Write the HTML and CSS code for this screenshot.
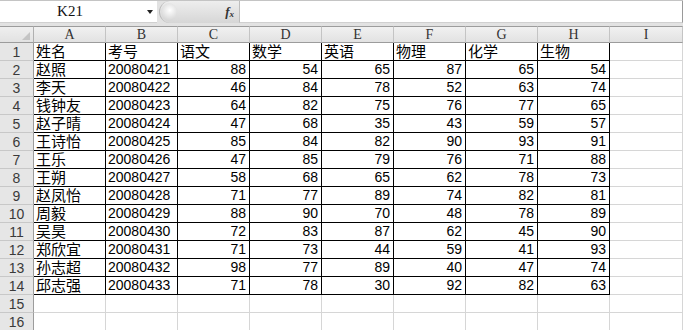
FILE: index.html
```html
<!DOCTYPE html>
<html>
<head>
<meta charset="utf-8">
<link rel="stylesheet" href="styles.css">
</head>
<body>
<div class="top">
  <div class="namebox"><span class="ref">K21</span><span class="arrow"></span></div>
  <div class="pill"><span class="knob"></span><span class="fx">f<sub>x</sub></span></div>
  <div class="formula"></div>
</div>
<div class="sheet">
  <div class="corner"><span class="tri"></span></div>
  <div class="h">A</div><div class="h">B</div><div class="h">C</div><div class="h">D</div><div class="h">E</div><div class="h">F</div><div class="h">G</div><div class="h">H</div><div class="h">I</div>

  <div class="r">1</div><div class="c t b">姓名</div><div class="c t b">考号</div><div class="c t b">语文</div><div class="c t b">数学</div><div class="c t b">英语</div><div class="c t b">物理</div><div class="c t b">化学</div><div class="c t b">生物</div><div class="c"></div>
  <div class="r">2</div><div class="c t b">赵照</div><div class="c m b">20080421</div><div class="c n b">88</div><div class="c n b">54</div><div class="c n b">65</div><div class="c n b">87</div><div class="c n b">65</div><div class="c n b">54</div><div class="c"></div>
  <div class="r">3</div><div class="c t b">李天</div><div class="c m b">20080422</div><div class="c n b">46</div><div class="c n b">84</div><div class="c n b">78</div><div class="c n b">52</div><div class="c n b">63</div><div class="c n b">74</div><div class="c"></div>
  <div class="r">4</div><div class="c t b">钱钟友</div><div class="c m b">20080423</div><div class="c n b">64</div><div class="c n b">82</div><div class="c n b">75</div><div class="c n b">76</div><div class="c n b">77</div><div class="c n b">65</div><div class="c"></div>
  <div class="r">5</div><div class="c t b">赵子晴</div><div class="c m b">20080424</div><div class="c n b">47</div><div class="c n b">68</div><div class="c n b">35</div><div class="c n b">43</div><div class="c n b">59</div><div class="c n b">57</div><div class="c"></div>
  <div class="r">6</div><div class="c t b">王诗怡</div><div class="c m b">20080425</div><div class="c n b">85</div><div class="c n b">84</div><div class="c n b">82</div><div class="c n b">90</div><div class="c n b">93</div><div class="c n b">91</div><div class="c"></div>
  <div class="r">7</div><div class="c t b">王乐</div><div class="c m b">20080426</div><div class="c n b">47</div><div class="c n b">85</div><div class="c n b">79</div><div class="c n b">76</div><div class="c n b">71</div><div class="c n b">88</div><div class="c"></div>
  <div class="r">8</div><div class="c t b">王朔</div><div class="c m b">20080427</div><div class="c n b">58</div><div class="c n b">68</div><div class="c n b">65</div><div class="c n b">62</div><div class="c n b">78</div><div class="c n b">73</div><div class="c"></div>
  <div class="r">9</div><div class="c t b">赵凤怡</div><div class="c m b">20080428</div><div class="c n b">71</div><div class="c n b">77</div><div class="c n b">89</div><div class="c n b">74</div><div class="c n b">82</div><div class="c n b">81</div><div class="c"></div>
  <div class="r">10</div><div class="c t b">周毅</div><div class="c m b">20080429</div><div class="c n b">88</div><div class="c n b">90</div><div class="c n b">70</div><div class="c n b">48</div><div class="c n b">78</div><div class="c n b">89</div><div class="c"></div>
  <div class="r">11</div><div class="c t b">吴昊</div><div class="c m b">20080430</div><div class="c n b">72</div><div class="c n b">83</div><div class="c n b">87</div><div class="c n b">62</div><div class="c n b">45</div><div class="c n b">90</div><div class="c"></div>
  <div class="r">12</div><div class="c t b">郑欣宜</div><div class="c m b">20080431</div><div class="c n b">71</div><div class="c n b">73</div><div class="c n b">44</div><div class="c n b">59</div><div class="c n b">41</div><div class="c n b">93</div><div class="c"></div>
  <div class="r">13</div><div class="c t b">孙志超</div><div class="c m b">20080432</div><div class="c n b">98</div><div class="c n b">77</div><div class="c n b">89</div><div class="c n b">40</div><div class="c n b">47</div><div class="c n b">74</div><div class="c"></div>
  <div class="r">14</div><div class="c t b">邱志强</div><div class="c m b">20080433</div><div class="c n b">71</div><div class="c n b">78</div><div class="c n b">30</div><div class="c n b">92</div><div class="c n b">82</div><div class="c n b">63</div><div class="c"></div>
  <div class="r">15</div><div class="c"></div><div class="c"></div><div class="c"></div><div class="c"></div><div class="c"></div><div class="c"></div><div class="c"></div><div class="c"></div><div class="c"></div>
  <div class="r">16</div><div class="c"></div><div class="c"></div><div class="c"></div><div class="c"></div><div class="c"></div><div class="c"></div><div class="c"></div><div class="c"></div><div class="c"></div>
</div>
</body>
</html>
```

FILE: styles.css
```css
html, body {
  margin: 0;
  padding: 0;
  background: #ffffff;
  overflow: hidden;
  width: 683px;
  height: 330px;
}

.top {
  box-sizing: border-box;
  height: 26px;
  display: flex;
  background: #e2e2e2;
  border-top: 1px solid #c4c4c4;
  padding-bottom: 3px;
}

.namebox {
  width: 157px;
  background: #ffffff;
  display: flex;
  align-items: center;
  border-bottom: 1px solid #d0d0d0;
  box-sizing: border-box;
}

.ref {
  width: 140px;
  text-align: center;
  font-family: "Liberation Serif", serif;
  font-size: 15px;
  color: #111;
}

.arrow {
  width: 0;
  height: 0;
  border-left: 3px solid transparent;
  border-right: 3px solid transparent;
  border-top: 4px solid #222;
  margin-left: 7px;
}

.pill {
  width: 80px;
  display: flex;
  align-items: center;
  justify-content: space-between;
  background: linear-gradient(#eeeeee, #d6d6d6);
  border-top-left-radius: 11px;
  border-bottom-left-radius: 11px;
  box-sizing: border-box;
  border-left: 1px solid #b8b8b8;
  padding: 0 5px 0 1px;
  margin-left: 2px;
}

.knob {
  width: 16px;
  height: 18px;
  border-radius: 50%;
  background: radial-gradient(circle at 55% 40%, #ffffff 0, #e6e6e6 45%, #c8c8c8 100%);
}

.fx {
  font-family: "Liberation Serif", serif;
  font-style: italic;
  font-weight: bold;
  font-size: 13px;
  color: #333;
}

.fx sub {
  font-size: 9px;
  vertical-align: -1px;
}

.formula {
  flex: 1;
  background: #ffffff;
  border-left: 1px solid #bdbdbd;
  border-right: 1px solid #9a9a9a;
  border-bottom: 1px solid #d0d0d0;
  box-sizing: border-box;
}

.sheet {
  display: grid;
  grid-template-columns: 34px repeat(8, 72px) 73px;
  grid-template-rows: 17px;
  grid-auto-rows: 18px;
}

.sheet > div {
  box-sizing: border-box;
  overflow: hidden;
  white-space: nowrap;
}

.corner {
  background: linear-gradient(#efefef, #e2e2e2);
  border-top: 1px solid #9c9c9c;
  border-right: 1px solid #b0b0b0;
  border-bottom: 1px solid #9c9c9c;
  position: relative;
}

.tri {
  position: absolute;
  right: 3px;
  bottom: 2px;
  width: 0;
  height: 0;
  border-left: 8px solid transparent;
  border-bottom: 8px solid #c4c4c4;
}

.h {
  background: linear-gradient(#f1f1f1, #e2e2e2);
  border-top: 1px solid #9c9c9c;
  border-right: 1px solid #c4c4c4;
  border-bottom: 1px solid #9c9c9c;
  font-family: "Liberation Serif", serif;
  font-size: 14px;
  line-height: 15px;
  text-align: center;
  color: #333;
}

.r {
  background: #e6e6e6;
  border-right: 1px solid #9c9c9c;
  border-bottom: 1px solid #c8c8c8;
  font-family: "Liberation Sans", sans-serif;
  font-size: 14px;
  line-height: 18px;
  text-align: center;
  color: #3a3a3a;
}

.c {
  border-right: 1px solid #d6d6d6;
  border-bottom: 1px solid #d6d6d6;
  display: flex;
  align-items: flex-end;
  padding: 0 2px 1px 2px;
  color: #000;
}

.c.b {
  border-color: #000000;
}

.sheet > .t {
  font-family: "Noto Sans CJK SC", sans-serif;
  font-size: 15px;
  line-height: 16px;
  overflow: visible;
}

.m, .n {
  font-family: "Liberation Sans", sans-serif;
  font-size: 14px;
  line-height: 16px;
}

.n {
  justify-content: flex-end;
  padding-right: 3px;
}
```
